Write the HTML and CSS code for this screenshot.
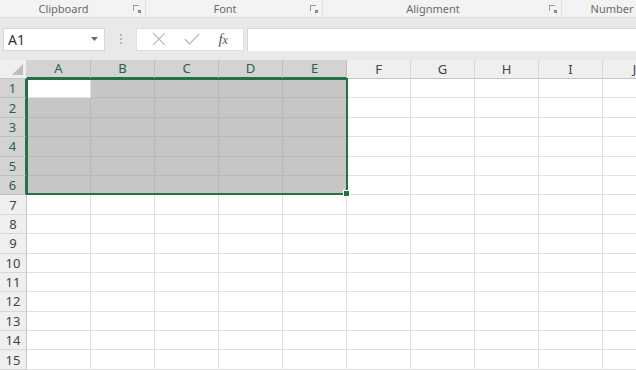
FILE: index.html
```html
<!DOCTYPE html>
<html lang="en">
<head>
    <meta charset="UTF-8">
    <title>Book1 - Excel</title>
    <link rel="stylesheet" href="styles.css">
</head>
<body>

<!-- ribbon group labels -->
<div class="ribbon">
    <div class="group g-clip"><span>Clipboard</span><i class="launcher"></i></div>
    <div class="group g-font"><span>Font</span><i class="launcher"></i></div>
    <div class="group g-align"><span>Alignment</span><i class="launcher"></i></div>
    <div class="group g-num"><span>Number</span></div>
</div>

<!-- formula bar -->
<div class="formula-bar">
    <div class="name-box">
        <span>A1</span>
        <svg width="7" height="4" viewBox="0 0 7 4"><path d="M0 0h7L3.5 4z" fill="#666"/></svg>
    </div>
    <div class="grip"><b></b><b></b><b></b></div>
    <div class="fx-buttons">
        <svg width="14" height="14" viewBox="0 0 14 14"><path d="M1 1l12 12M13 1L1 13" stroke="#bdbdbd" stroke-width="1.2" fill="none"/></svg>
        <svg width="16" height="14" viewBox="0 0 16 14"><path d="M1 7l4.5 5L15 2" stroke="#bdbdbd" stroke-width="1.4" fill="none"/></svg>
        <span class="fx"><i>f</i><i>x</i></span>
    </div>
    <div class="formula-input"></div>
</div>

<!-- worksheet -->
<div class="sheet">
    <div id="grid" class="grid"></div>
    <div class="selection"><i class="handle"></i></div>
</div>

<script>
    // build headers and cells
    const grid = document.getElementById("grid");
    const cols = ["A", "B", "C", "D", "E", "F", "G", "H", "I", "J"];

    const corner = document.createElement("div");
    corner.className = "corner";
    grid.appendChild(corner);

    cols.forEach((c, i) => {
        const h = document.createElement("div");
        h.className = "col-head" + (i < 5 ? " sel" : "");
        h.textContent = c;
        grid.appendChild(h);
    });

    for (let r = 1; r <= 15; r++) {
        const rh = document.createElement("div");
        rh.className = "row-head" + (r <= 6 ? " sel" : "");
        rh.textContent = r;
        grid.appendChild(rh);

        cols.forEach((c, i) => {
            const cell = document.createElement("div");
            cell.className = "cell";
            if (r <= 6 && i < 5 && !(r === 1 && i === 0)) cell.classList.add("in-range");
            grid.appendChild(cell);
        });
    }
</script>

</body>
</html>
```

FILE: styles.css
```css
body {
    margin: 0;
    width: 636px;
    height: 370px;
    overflow: hidden;
    background: #e9e9e9;
    font-family: "Noto Sans", "Open Sans", sans-serif;
    color: #444;
}

/* Ribbon */
.ribbon {
    display: flex;
    height: 17px;
    background: #f3f3f3;
    border-bottom: 1px solid #dcdcdc;
    font-size: 11px;
    color: #6a6a6a;
}

.group {
    position: relative;
    flex-shrink: 0;
    display: flex;
    align-items: center;
    justify-content: center;
    box-sizing: border-box;
    border-right: 1px solid #e0e0e0;
    padding: 0 18px 1px 0;
}

.g-clip { width: 146px; }
.g-font { width: 177px; }
.g-align { width: 239px; }
.g-num { flex: 1; flex-shrink: 1; border-right: none; padding: 0 0 1px 26px; }

.launcher {
    position: absolute;
    right: 6px;
    top: 5px;
    width: 5px;
    height: 5px;
    border-top: 1px solid #999;
    border-left: 1px solid #999;
}

.launcher::after {
    content: "";
    position: absolute;
    right: -2px;
    bottom: -2px;
    width: 3px;
    height: 3px;
    background: #888;
}

/* Formula bar */
.formula-bar {
    display: flex;
    align-items: center;
    height: 42px;
    padding-left: 3px;
}

.name-box {
    display: flex;
    align-items: center;
    justify-content: space-between;
    box-sizing: border-box;
    width: 102px;
    height: 23px;
    padding: 0 6px 0 4px;
    background: #fff;
    border: 1px solid #d6d6d6;
    font-size: 14px;
    color: #333;
}

.grip {
    display: flex;
    flex-direction: column;
    gap: 2px;
    width: 31px;
    align-items: center;
}

.grip b {
    width: 2px;
    height: 2px;
    background: #b5b5b5;
}

.fx-buttons {
    display: flex;
    align-items: center;
    justify-content: space-around;
    box-sizing: border-box;
    width: 108px;
    height: 23px;
    padding: 0 6px;
    background: #fff;
    border: 1px solid #e0e0e0;
}

.fx {
    font-family: "Liberation Serif", serif;
    font-size: 15px;
    color: #555;
}

.fx i:last-child {
    font-size: 12px;
}

.formula-input {
    flex: 1;
    height: 23px;
    margin-left: 3px;
    background: #fff;
    border-top: 1px solid #d6d6d6;
    border-left: 1px solid #d6d6d6;
    box-sizing: border-box;
}

/* Worksheet */
.sheet {
    position: relative;
    height: 310px;
    background: #fff;
}

.grid {
    display: grid;
    grid-template-columns: 27px repeat(10, 64px);
    grid-template-rows: 19px repeat(15, 19.4px);
}

.corner {
    background: #efefef;
    border-right: 1px solid #d4d4d4;
    border-bottom: 1px solid #c4c4c4;
    position: relative;
}

.corner::after {
    content: "";
    position: absolute;
    right: 3px;
    bottom: 3px;
    border-left: 11px solid transparent;
    border-bottom: 11px solid #bcbcbc;
}

.col-head, .row-head {
    display: flex;
    align-items: center;
    justify-content: center;
    box-sizing: border-box;
    background: #efefef;
    font-size: 13px;
    color: #444;
}

.col-head {
    border-right: 1px solid #d8d8d8;
    border-bottom: 1px solid #c4c4c4;
    padding-bottom: 1px;
}

.row-head {
    border-right: 1px solid #c4c4c4;
    border-bottom: 1px solid #d8d8d8;
}

.col-head.sel {
    background: #d3d3d3;
    color: #2f5f44;
    border-right-color: #bfbfbf;
    border-bottom: 2px solid #217346;
}

.row-head.sel {
    background: #d3d3d3;
    color: #2f5f44;
    border-bottom-color: #bfbfbf;
    border-right: 2px solid #217346;
}

.cell {
    box-sizing: border-box;
    border-right: 1px solid #e1e1e1;
    border-bottom: 1px solid #e1e1e1;
}

.cell.in-range {
    background: #c6c6c6;
    border-color: #b9b9b9;
}

/* selection outline over the range */
.selection {
    position: absolute;
    left: 26px;
    top: 18px;
    width: 322px;
    height: 117px;
    border: 2px solid #217346;
    box-sizing: border-box;
    pointer-events: none;
}

.handle {
    position: absolute;
    right: -4px;
    bottom: -4px;
    width: 5px;
    height: 5px;
    background: #217346;
    border: 1px solid #fff;
}
```
